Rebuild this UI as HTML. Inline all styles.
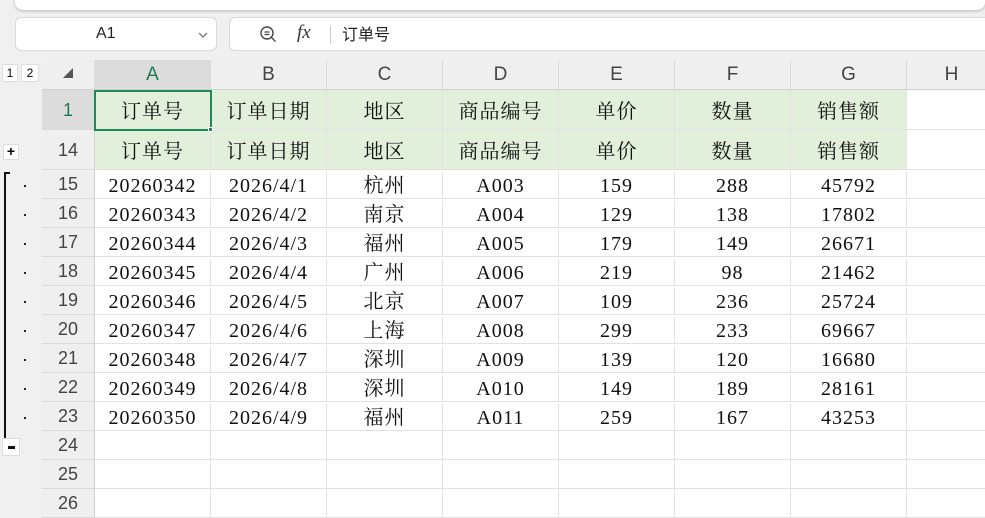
<!DOCTYPE html>
<html><head><meta charset="utf-8"><style>
*{margin:0;padding:0;box-sizing:border-box}
body{width:985px;height:506px;overflow:hidden;background:#f0f0f0;position:relative;font-family:"Liberation Sans","Noto Sans CJK SC",sans-serif}
.a{position:absolute}
.top{left:15px;top:-10px;width:970px;height:20px;background:#fff;border-radius:8px;box-shadow:0 1px 3px rgba(0,0,0,.25)}
.box{background:#fff;border:1px solid #d8d8d8;border-radius:6px}
.ch{top:60px;height:30px;background:#efefef;border-right:1px solid #dadada;border-bottom:1px solid #d0d0d0;text-align:center;line-height:30px;font-size:19px;color:#444}
.rh{left:42px;width:53px;background:#efefef;border-bottom:1px solid #dadada;border-right:1px solid #d0d0d0;text-align:center;font-size:18px;color:#444}
.row{left:95px;width:890px;background:#fff;border-bottom:1px solid #e2e2e2}
.c{position:absolute;top:2px;height:100%;width:116px;border-right:1px solid #e2e2e2;text-align:center;font-family:"Liberation Serif","Noto Serif CJK SC",serif;font-size:20px;letter-spacing:1px;color:#111}
.g{background:#e2efda;top:0;padding-top:2px}
.dot{left:24px;width:2px;height:2px;background:#222}
</style></head><body>
<div class="a top"></div>
<div class="a box" style="left:15px;top:17px;width:202px;height:34px"><span class="a" style="left:80px;top:7px;font-size:16px;color:#222">A1</span><svg class="a" style="left:181px;top:12px" width="12" height="10"><path d="M2 3l4 4 4-4" stroke="#777" fill="none" stroke-width="1.3"/></svg></div>
<div class="a box" style="left:229px;top:17px;width:770px;height:34px">
<svg class="a" style="left:29px;top:7px" width="18" height="18"><circle cx="8" cy="8" r="6" stroke="#444" fill="none" stroke-width="1.4"/><path d="M12.5 12.5l4 4M5.5 7h5M5.5 9.5h5" stroke="#444" stroke-width="1.3"/></svg>
<span class="a" style="left:67px;top:4px;font-family:'Liberation Serif',serif;font-style:italic;font-size:19px;color:#333">fx</span>
<div class="a" style="left:100px;top:8px;width:1px;height:18px;background:#ccc"></div>
<span class="a" style="left:112px;top:3px;font-size:16px;color:#222;font-family:'Liberation Sans','Noto Sans CJK SC',sans-serif">订单号</span></div>
<div class="a" style="left:2px;top:64px;width:16px;height:18px;background:#fff;border:1px solid #ddd;font-size:12px;text-align:center;line-height:16px">1</div>
<div class="a" style="left:21px;top:64px;width:18px;height:18px;background:#fff;border:1px solid #ddd;font-size:12px;text-align:center;line-height:16px">2</div>
<div class="a ch" style="left:42px;width:53px;font-size:10px;color:#555">◢</div>
<div class="a ch" style="left:95px;width:116px;background:#dcdcdc;color:#1e7a4e">A</div>
<div class="a ch" style="left:211px;width:116px">B</div>
<div class="a ch" style="left:327px;width:116px">C</div>
<div class="a ch" style="left:443px;width:116px">D</div>
<div class="a ch" style="left:559px;width:116px">E</div>
<div class="a ch" style="left:675px;width:116px">F</div>
<div class="a ch" style="left:791px;width:116px">G</div>
<div class="a ch" style="left:907px;width:90px">H</div>

<div class="a rh" style="top:90px;height:40px;line-height:40px;background:#dcdcdc;color:#1e7a4e">1</div>
<div class="a rh" style="top:130px;height:40px;line-height:40px">14</div>
<div class="a row" style="top:90px;height:40px;line-height:40px"><div class="c g" style="left:0">订单号</div><div class="c g" style="left:116px">订单日期</div><div class="c g" style="left:232px">地区</div><div class="c g" style="left:348px">商品编号</div><div class="c g" style="left:464px">单价</div><div class="c g" style="left:580px">数量</div><div class="c g" style="left:696px">销售额</div></div>
<div class="a row" style="top:130px;height:40px;line-height:40px"><div class="c g" style="left:0">订单号</div><div class="c g" style="left:116px">订单日期</div><div class="c g" style="left:232px">地区</div><div class="c g" style="left:348px">商品编号</div><div class="c g" style="left:464px">单价</div><div class="c g" style="left:580px">数量</div><div class="c g" style="left:696px">销售额</div></div>
<div class="a" style="left:94px;top:90px;width:118px;height:41px;border:2px solid #1e8a5a"></div>
<div class="a" style="left:208px;top:127px;width:5px;height:5px;background:#1e8a5a;border:1px solid #fff"></div>
<div class="a" style="left:3px;top:144px;width:16px;height:16px;background:#fff;border:1px solid #ddd;font-size:14px;font-weight:bold;text-align:center;line-height:13px">+</div>

<div class="a rh" style="top:170px;height:29px;line-height:29px">15</div>
<div class="a rh" style="top:199px;height:29px;line-height:29px">16</div>
<div class="a rh" style="top:228px;height:29px;line-height:29px">17</div>
<div class="a rh" style="top:257px;height:29px;line-height:29px">18</div>
<div class="a rh" style="top:286px;height:29px;line-height:29px">19</div>
<div class="a rh" style="top:315px;height:29px;line-height:29px">20</div>
<div class="a rh" style="top:344px;height:29px;line-height:29px">21</div>
<div class="a rh" style="top:373px;height:29px;line-height:29px">22</div>
<div class="a rh" style="top:402px;height:29px;line-height:29px">23</div>
<div class="a rh" style="top:431px;height:29px;line-height:29px">24</div>
<div class="a rh" style="top:460px;height:29px;line-height:29px">25</div>
<div class="a rh" style="top:489px;height:29px;line-height:29px">26</div>

<div class="a row" style="top:170px;height:29px;line-height:29px"><div class="c" style="left:0">20260342</div><div class="c" style="left:116px">2026/4/1</div><div class="c" style="left:232px">杭州</div><div class="c" style="left:348px">A003</div><div class="c" style="left:464px">159</div><div class="c" style="left:580px">288</div><div class="c" style="left:696px">45792</div></div>
<div class="a row" style="top:199px;height:29px;line-height:29px"><div class="c" style="left:0">20260343</div><div class="c" style="left:116px">2026/4/2</div><div class="c" style="left:232px">南京</div><div class="c" style="left:348px">A004</div><div class="c" style="left:464px">129</div><div class="c" style="left:580px">138</div><div class="c" style="left:696px">17802</div></div>
<div class="a row" style="top:228px;height:29px;line-height:29px"><div class="c" style="left:0">20260344</div><div class="c" style="left:116px">2026/4/3</div><div class="c" style="left:232px">福州</div><div class="c" style="left:348px">A005</div><div class="c" style="left:464px">179</div><div class="c" style="left:580px">149</div><div class="c" style="left:696px">26671</div></div>
<div class="a row" style="top:257px;height:29px;line-height:29px"><div class="c" style="left:0">20260345</div><div class="c" style="left:116px">2026/4/4</div><div class="c" style="left:232px">广州</div><div class="c" style="left:348px">A006</div><div class="c" style="left:464px">219</div><div class="c" style="left:580px">98</div><div class="c" style="left:696px">21462</div></div>
<div class="a row" style="top:286px;height:29px;line-height:29px"><div class="c" style="left:0">20260346</div><div class="c" style="left:116px">2026/4/5</div><div class="c" style="left:232px">北京</div><div class="c" style="left:348px">A007</div><div class="c" style="left:464px">109</div><div class="c" style="left:580px">236</div><div class="c" style="left:696px">25724</div></div>
<div class="a row" style="top:315px;height:29px;line-height:29px"><div class="c" style="left:0">20260347</div><div class="c" style="left:116px">2026/4/6</div><div class="c" style="left:232px">上海</div><div class="c" style="left:348px">A008</div><div class="c" style="left:464px">299</div><div class="c" style="left:580px">233</div><div class="c" style="left:696px">69667</div></div>
<div class="a row" style="top:344px;height:29px;line-height:29px"><div class="c" style="left:0">20260348</div><div class="c" style="left:116px">2026/4/7</div><div class="c" style="left:232px">深圳</div><div class="c" style="left:348px">A009</div><div class="c" style="left:464px">139</div><div class="c" style="left:580px">120</div><div class="c" style="left:696px">16680</div></div>
<div class="a row" style="top:373px;height:29px;line-height:29px"><div class="c" style="left:0">20260349</div><div class="c" style="left:116px">2026/4/8</div><div class="c" style="left:232px">深圳</div><div class="c" style="left:348px">A010</div><div class="c" style="left:464px">149</div><div class="c" style="left:580px">189</div><div class="c" style="left:696px">28161</div></div>
<div class="a row" style="top:402px;height:29px;line-height:29px"><div class="c" style="left:0">20260350</div><div class="c" style="left:116px">2026/4/9</div><div class="c" style="left:232px">福州</div><div class="c" style="left:348px">A011</div><div class="c" style="left:464px">259</div><div class="c" style="left:580px">167</div><div class="c" style="left:696px">43253</div></div>
<div class="a row" style="top:431px;height:29px"><div class="c" style="left:0;top:0"></div><div class="c" style="left:116px;top:0"></div><div class="c" style="left:232px;top:0"></div><div class="c" style="left:348px;top:0"></div><div class="c" style="left:464px;top:0"></div><div class="c" style="left:580px;top:0"></div><div class="c" style="left:696px;top:0"></div></div>
<div class="a row" style="top:460px;height:29px"><div class="c" style="left:0;top:0"></div><div class="c" style="left:116px;top:0"></div><div class="c" style="left:232px;top:0"></div><div class="c" style="left:348px;top:0"></div><div class="c" style="left:464px;top:0"></div><div class="c" style="left:580px;top:0"></div><div class="c" style="left:696px;top:0"></div></div>
<div class="a row" style="top:489px;height:29px"><div class="c" style="left:0;top:0"></div><div class="c" style="left:116px;top:0"></div><div class="c" style="left:232px;top:0"></div><div class="c" style="left:348px;top:0"></div><div class="c" style="left:464px;top:0"></div><div class="c" style="left:580px;top:0"></div><div class="c" style="left:696px;top:0"></div></div>

<div class="a" style="left:4px;top:172px;width:2px;height:266px;background:#111"></div>
<div class="a" style="left:4px;top:172px;width:6px;height:2px;background:#111"></div>
<div class="a dot" style="top:185px"></div><div class="a dot" style="top:214px"></div><div class="a dot" style="top:243px"></div><div class="a dot" style="top:272px"></div><div class="a dot" style="top:301px"></div><div class="a dot" style="top:330px"></div><div class="a dot" style="top:359px"></div><div class="a dot" style="top:388px"></div><div class="a dot" style="top:417px"></div>
<div class="a" style="left:2px;top:438px;width:18px;height:18px;background:#fff;border:1px solid #ddd"><div class="a" style="left:5px;top:7px;width:7px;height:3px;background:#111"></div></div>
</body></html>
